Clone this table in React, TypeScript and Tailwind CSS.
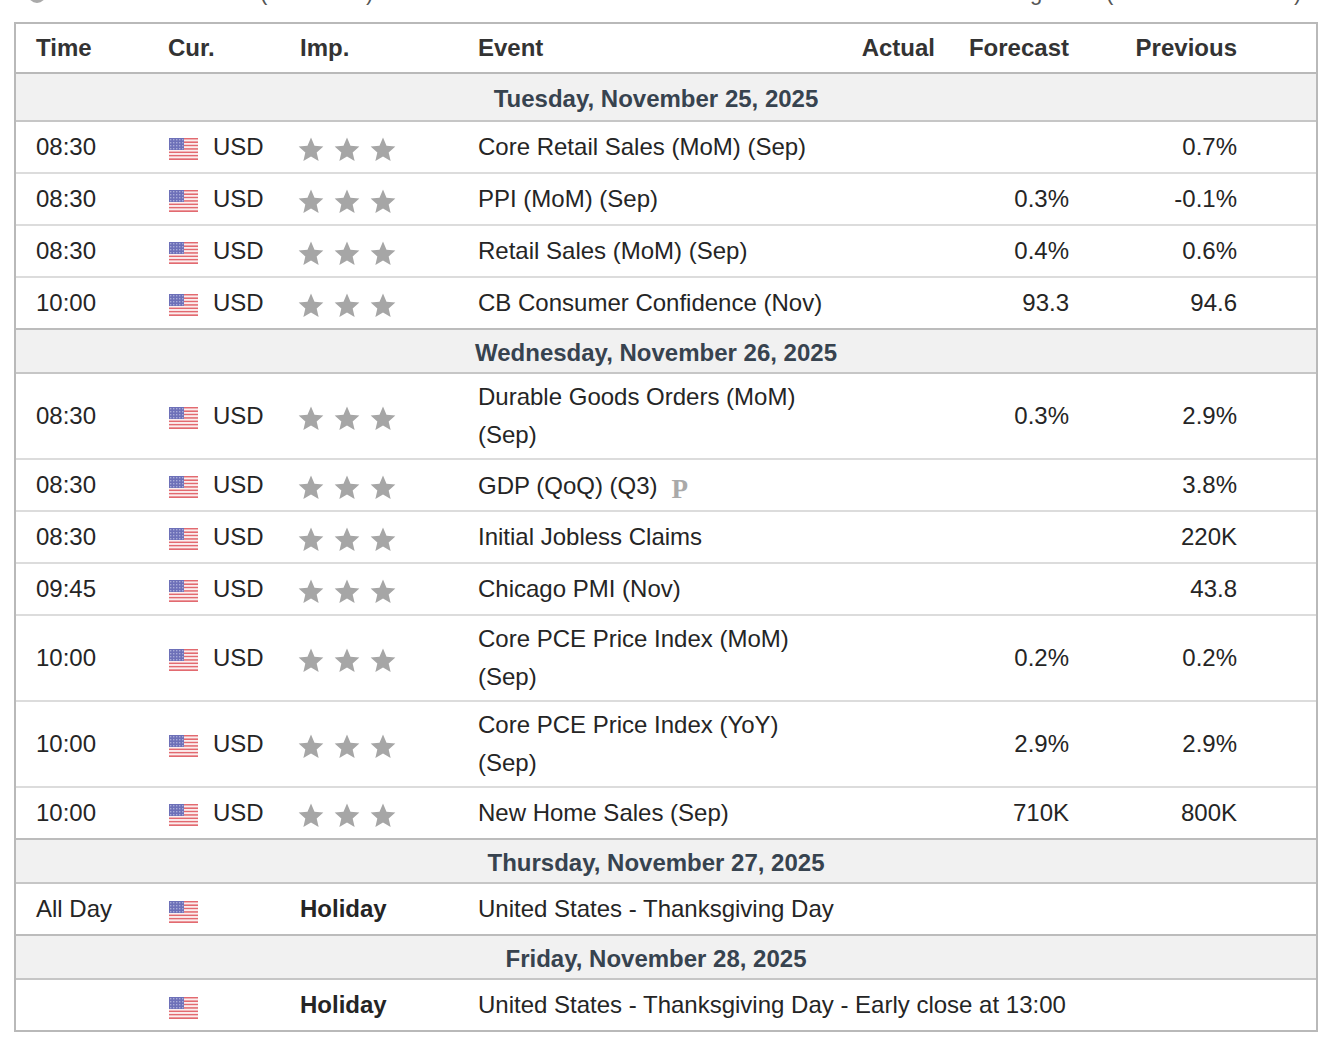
import React from "react";

type Ev = {
  time: string;
  name: string;
  actual?: string;
  forecast?: string;
  previous?: string;
  prelim?: boolean;
};

type Day = {
  date: string;
  events?: Ev[];
  holiday?: { time: string; name: string };
};

const days: Day[] = [
  {
    date: "Tuesday, November 25, 2025",
    events: [
      { time: "08:30", name: "Core Retail Sales (MoM) (Sep)", previous: "0.7%" },
      { time: "08:30", name: "PPI (MoM) (Sep)", forecast: "0.3%", previous: "-0.1%" },
      { time: "08:30", name: "Retail Sales (MoM) (Sep)", forecast: "0.4%", previous: "0.6%" },
      { time: "10:00", name: "CB Consumer Confidence (Nov)", forecast: "93.3", previous: "94.6" },
    ],
  },
  {
    date: "Wednesday, November 26, 2025",
    events: [
      { time: "08:30", name: "Durable Goods Orders (MoM) (Sep)", forecast: "0.3%", previous: "2.9%" },
      { time: "08:30", name: "GDP (QoQ) (Q3)", previous: "3.8%", prelim: true },
      { time: "08:30", name: "Initial Jobless Claims", previous: "220K" },
      { time: "09:45", name: "Chicago PMI (Nov)", previous: "43.8" },
      { time: "10:00", name: "Core PCE Price Index (MoM) (Sep)", forecast: "0.2%", previous: "0.2%" },
      { time: "10:00", name: "Core PCE Price Index (YoY) (Sep)", forecast: "2.9%", previous: "2.9%" },
      { time: "10:00", name: "New Home Sales (Sep)", forecast: "710K", previous: "800K" },
    ],
  },
  {
    date: "Thursday, November 27, 2025",
    holiday: { time: "All Day", name: "United States - Thanksgiving Day" },
  },
  {
    date: "Friday, November 28, 2025",
    holiday: { time: "", name: "United States - Thanksgiving Day - Early close at 13:00" },
  },
];

const cols = "grid grid-cols-[132px_132px_178px_382px_115px_134px_227px]";

function UsFlag() {
  return (
    <svg width="29" height="22" viewBox="0 0 29 22" className="shrink-0">
      {Array.from({ length: 13 }).map((_, i) => (
        <rect
          key={i}
          x="0"
          y={(i * 22) / 13}
          width="29"
          height={22 / 13}
          fill={i % 2 === 0 ? "#e26a70" : "#fbeeee"}
        />
      ))}
      <rect x="0" y="0" width="15" height="12" fill="#6d70b8" />
      {Array.from({ length: 4 }).map((_, r) =>
        Array.from({ length: 5 }).map((_, c) => (
          <rect key={`${r}-${c}`} x={1 + c * 3} y={1 + r * 3} width="1.4" height="1.4" fill="#a9abd8" />
        ))
      )}
    </svg>
  );
}

function Star() {
  return (
    <svg width="26" height="25" viewBox="0 0 24 23">
      <path
        d="M12 0.5L15.23 8.05L23.41 8.79L17.23 14.2L19.05 22.21L12 18L4.95 22.21L6.77 14.2L0.59 8.79L8.77 8.05Z"
        fill="#a6a6a6"
      />
    </svg>
  );
}

function Stars() {
  return (
    <div className="flex items-center gap-[10px] ml-[-2px] mt-[4px]">
      <Star />
      <Star />
      <Star />
    </div>
  );
}

function DateRow({ date, first }: { date: string; first: boolean }) {
  return (
    <div
      className={`bg-[#f1f1f1] flex items-center justify-center pr-[20px] border-b-2 border-[#c6c6c6] ${
        first ? "h-[48px]" : "h-[46px] border-t-2 border-t-[#bcbcbc]"
      }`}
    >
      <span className="font-bold text-[#37434f] mt-[4px]">{date}</span>
    </div>
  );
}

function EventRow({ ev, last }: { ev: Ev; last: boolean }) {
  return (
    <div
      className={`${cols} items-center ${last ? "min-h-[50px]" : "min-h-[52px] border-b-2 border-[#dcdcdc]"}`}
    >
      <div className="pl-[20px]">{ev.time}</div>
      <div className="pl-[20px] flex items-center gap-[15px]">
        <span className="mt-[3px] ml-[1px] flex">
          <UsFlag />
        </span>
        <span>USD</span>
      </div>
      <div className="pl-[20px]">
        <Stars />
      </div>
      <div className="pl-[20px] pr-[2px] py-[4px] leading-[38px]">
        {ev.name}
        {ev.prelim && (
          <span className="relative top-[4px] ml-[14px] font-bold text-[27px] text-[#a9a9a9] font-['Liberation_Serif',serif]">
            P
          </span>
        )}
      </div>
      <div className="pr-[20px] text-right">{ev.actual}</div>
      <div className="pr-[20px] text-right">{ev.forecast}</div>
      <div className="pr-[79px] text-right">{ev.previous}</div>
    </div>
  );
}

function HolidayRow({ time, name }: { time: string; name: string }) {
  return (
    <div className={`${cols} h-[50px] items-center`}>
      <div className="pl-[20px]">{time}</div>
      <div className="pl-[20px] flex">
        <span className="mt-[6px] ml-[1px] flex">
          <UsFlag />
        </span>
      </div>
      <div className="pl-[20px] font-bold">Holiday</div>
      <div className="col-span-4 pl-[20px]">{name}</div>
    </div>
  );
}

export default function App() {
  return (
    <div className="w-[1338px] h-[1052px] bg-white text-[#252525] text-[24px] font-['Liberation_Sans',Arial,sans-serif] overflow-hidden">
      {/* cut-off line above the table */}
      <div className="h-[22px] relative overflow-hidden">
        <div className="absolute left-0 top-[-19px] w-full text-[#555] text-[22px] leading-[24px]">
          <span className="absolute left-[28px] top-0 w-[18px] h-[22px] rounded-full border-[3px] border-[#aaa]" />
          <span className="absolute left-[260px]">(</span>
          <span className="absolute left-[366px]">)</span>
          <span className="absolute left-[1030px]">g</span>
          <span className="absolute left-[1106px]">(</span>
          <span className="absolute left-[1294px]">)</span>
        </div>
      </div>

      <div className="ml-[14px] w-[1304px] border-2 border-[#b9b9b9]">
        <div className={`${cols} h-[50px] items-center font-bold text-[#333] border-b-2 border-[#b9b9b9]`}>
          <div className="pl-[20px]">Time</div>
          <div className="pl-[20px]">Cur.</div>
          <div className="pl-[20px]">Imp.</div>
          <div className="pl-[20px]">Event</div>
          <div className="pr-[20px] text-right">Actual</div>
          <div className="pr-[20px] text-right">Forecast</div>
          <div className="pr-[79px] text-right">Previous</div>
        </div>

        {days.map((d, i) => (
          <div key={d.date}>
            <DateRow date={d.date} first={i === 0} />
            {d.events?.map((ev, j) => (
              <EventRow key={j} ev={ev} last={j === d.events!.length - 1} />
            ))}
            {d.holiday && <HolidayRow time={d.holiday.time} name={d.holiday.name} />}
          </div>
        ))}
      </div>
    </div>
  );
}
